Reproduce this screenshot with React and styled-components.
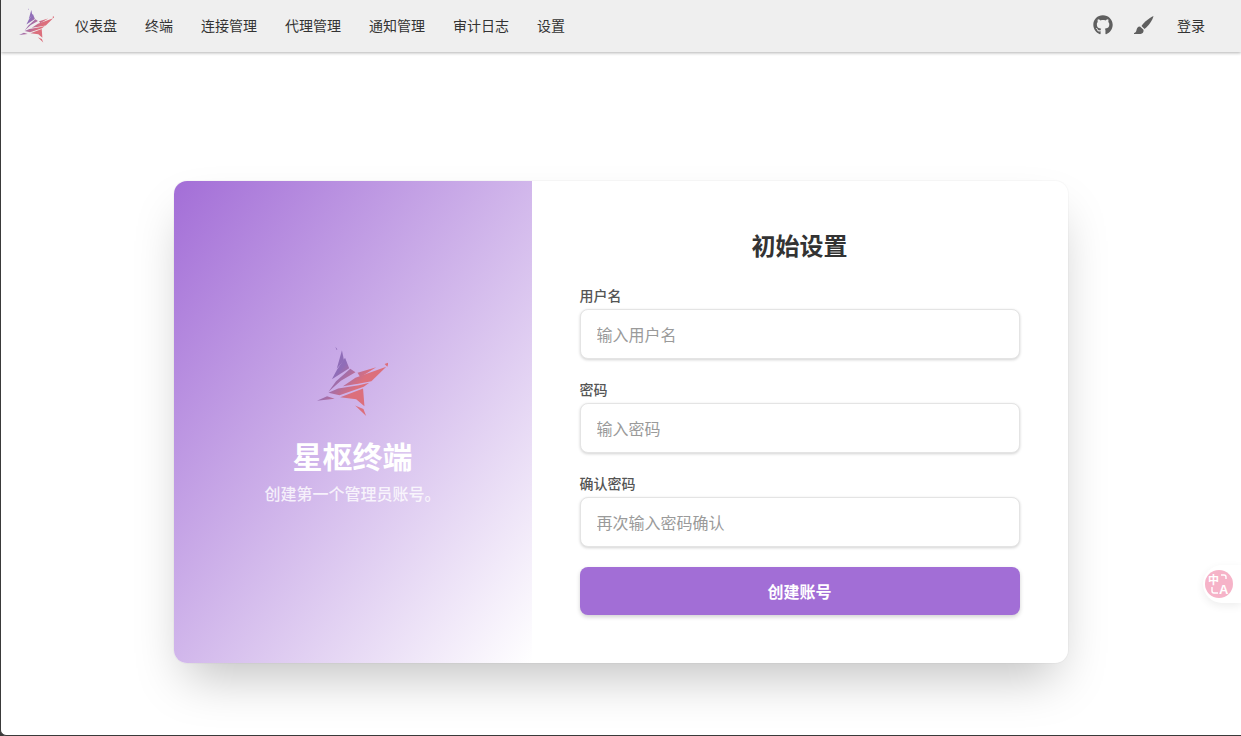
import React, { useId } from "react";
import styled, { createGlobalStyle } from "styled-components";
import { FaGithub } from "react-icons/fa";

const GlobalStyle = createGlobalStyle`
  html, body {
    margin: 0;
    padding: 0;
    height: 100%;
    background: #3a3a3a;
    overflow: hidden;
    font-family: "Noto Sans CJK SC", "Noto Sans", sans-serif;
  }
  * { box-sizing: border-box; }
`;

const Page = styled.div`
  position: relative;
  width: 1241px;
  height: 736px;
  display: flex;
  flex-direction: column;
  background: #fff;
  border-left: 1px solid #3a3a3a;
  border-bottom: 1px solid #3a3a3a;
  border-bottom-left-radius: 6px;
  overflow: hidden;
`;

const Navbar = styled.nav`
  flex: none;
  height: 52px;
  display: flex;
  align-items: center;
  padding: 0 22px 2px 18px;
  background: #efefef;
  box-shadow: 0 1px 3px rgba(0, 0, 0, 0.3);
  position: relative;
  z-index: 1;
`;

const NavLinks = styled.div`
  display: flex;
  margin-left: 7px;
`;

const NavLink = styled.a`
  padding: 0 14px;
  font-size: 14px;
  line-height: 20px;
  color: #333;
`;

const NavRight = styled.div`
  margin-left: auto;
  display: flex;
  align-items: center;
  color: #5f5f5f;
`;

const IconSlot = styled.span`
  display: flex;
  margin-right: ${(p) => p.$gap}px;
`;

const Main = styled.main`
  flex: 1;
  display: flex;
  align-items: flex-start;
  justify-content: center;
  padding-top: 129px;
  padding-right: 1px;
`;

const Card = styled.section`
  width: 894px;
  height: 482px;
  display: flex;
  border-radius: 13px;
  background: #fff;
  overflow: hidden;
  box-shadow: 0 25px 50px -12px rgba(0, 0, 0, 0.25), 0 0 0 1px rgba(0, 0, 0, 0.025);
`;

const Brand = styled.div`
  flex: none;
  width: 358px;
  display: flex;
  flex-direction: column;
  align-items: center;
  padding-top: 165px;
  background: linear-gradient(to bottom right, #a36ed7 0%, #ffffff 100%);
  color: #fff;
`;

const BrandTitle = styled.h1`
  margin: 20px 0 0;
  font-size: 30px;
  line-height: 36px;
  font-weight: 700;
`;

const BrandText = styled.p`
  margin: 8px 0 0 0;
  font-size: 16px;
  line-height: 24px;
  font-weight: 500;
  opacity: 0.8;
  align-self: flex-start;
  padding-left: 91px;
`;

const Form = styled.form`
  flex: 1;
  display: flex;
  flex-direction: column;
  padding: 48px 48px 0;
`;

const FormTitle = styled.h2`
  margin: 0 0 24px;
  text-align: center;
  font-size: 24px;
  line-height: 32px;
  font-weight: 700;
  color: #333;
`;

const Field = styled.label`
  display: block;
  margin-bottom: 20px;
`;

const FieldLabel = styled.span`
  display: block;
  font-size: 14px;
  line-height: 20px;
  font-weight: 500;
  color: #555;
  margin-bottom: 4px;
`;

const Input = styled.input`
  display: block;
  width: 100%;
  height: 50px;
  padding: 0 16px;
  border: 1px solid #e4e4e4;
  border-radius: 8px;
  background: #fff;
  font: inherit;
  font-size: 16px;
  color: #333;
  box-shadow: 0 1px 3px rgba(0, 0, 0, 0.18);
  outline: none;
  &::placeholder {
    color: #9a9a9a;
  }
`;

const Submit = styled.button`
  height: 48px;
  border: none;
  border-radius: 8px;
  background: #a26ed6;
  color: #fff;
  font: inherit;
  font-size: 16px;
  font-weight: 700;
  box-shadow: 0 2px 4px rgba(0, 0, 0, 0.18);
`;

const TranslateTab = styled.div`
  position: absolute;
  right: 0;
  top: 565px;
  width: 38px;
  height: 38px;
  padding: 5px 0 0 2px;
  background: #fff;
  border-radius: 19px 0 0 19px;
  box-shadow: 0 3px 8px rgba(0, 0, 0, 0.07);
`;

const TranslateIcon = styled.div`
  width: 28px;
  height: 28px;
  border-radius: 50%;
  background: #f6b3c8;
  color: #fff;
  display: flex;
  align-items: center;
  justify-content: center;
`;

const shards = [
  "108,26 114,34 111,35",
  "127,36 133,66 112,90",
  "136,58 148,88 98,120 113,92",
  "151,90 166,100 124,124 88,156 110,126",
  "172,101 226,85 180,114",
  "258,84 262,72 250,76",
  "255,84 212,126 178,132 130,140 166,116",
  "176,137 206,130 190,142 120,166 88,159 116,147",
  "55,182 84,169 106,176",
  "122,172 188,147 192,198 168,178",
  "165,196 197,226 189,206",
];

const StarLogo = ({ size }) => {
  const id = useId();
  return (
    <svg width={size} height={size} viewBox="55 25 205 203" style={{ display: "block" }}>
      <defs>
        <linearGradient id={id} gradientUnits="userSpaceOnUse" x1="90" y1="70" x2="210" y2="170">
          <stop offset="0.25" stopColor="#8f6db8" />
          <stop offset="0.7" stopColor="#dc6f7c" />
        </linearGradient>
      </defs>
      {shards.map((points) => (
        <polygon key={points} points={points} fill={`url(#${id})`} />
      ))}
    </svg>
  );
};

const BrushIcon = () => (
  <svg width="20" height="20" viewBox="0 0 20 20" fill="currentColor">
    <path d="M19.5 1C15.5 3 10 7 7.5 11L10.5 14C14.5 11 18.5 5.5 19.5 1Z" />
    <path d="M6 11.5C3.5 11.5 2.8 13.5 2.4 15.5C2.1 17 1.2 17.6 0 18V19H6.5C8.6 19 10 17 9.5 14.8Z" />
  </svg>
);

const links = ["仪表盘", "终端", "连接管理", "代理管理", "通知管理", "审计日志", "设置"];

export default function App() {
  return (
    <Page>
      <GlobalStyle />
      <Navbar>
        <StarLogo size={35} />
        <NavLinks>
          {links.map((l) => (
            <NavLink key={l}>{l}</NavLink>
          ))}
        </NavLinks>
        <NavRight>
          <IconSlot $gap={21}>
            <FaGithub size={20} />
          </IconSlot>
          <IconSlot $gap={9}>
            <BrushIcon />
          </IconSlot>
          <NavLink>登录</NavLink>
        </NavRight>
      </Navbar>
      <Main>
        <Card>
          <Brand>
            <StarLogo size={71} />
            <BrandTitle>星枢终端</BrandTitle>
            <BrandText>创建第一个管理员账号。</BrandText>
          </Brand>
          <Form onSubmit={(e) => e.preventDefault()}>
            <FormTitle>初始设置</FormTitle>
            <Field>
              <FieldLabel>用户名</FieldLabel>
              <Input placeholder="输入用户名" />
            </Field>
            <Field>
              <FieldLabel>密码</FieldLabel>
              <Input type="password" placeholder="输入密码" />
            </Field>
            <Field>
              <FieldLabel>确认密码</FieldLabel>
              <Input type="password" placeholder="再次输入密码确认" />
            </Field>
            <Submit>创建账号</Submit>
          </Form>
        </Card>
      </Main>
      <TranslateTab>
        <TranslateIcon>
          <svg width="24" height="24" viewBox="0 0 24 24">
            <text x="1" y="12" fontSize="11" fontWeight="700" fill="#fff" fontFamily="Noto Sans CJK SC, sans-serif">中</text>
            <text x="12" y="22" fontSize="13" fontWeight="700" fill="#fff" fontFamily="Liberation Sans, sans-serif">A</text>
            <path d="M14 3h3a2 2 0 0 1 2 2v2M11 21H7a2 2 0 0 1-2-2v-4" fill="none" stroke="#fff" strokeWidth="1.4" />
          </svg>
        </TranslateIcon>
      </TranslateTab>
    </Page>
  );
}
